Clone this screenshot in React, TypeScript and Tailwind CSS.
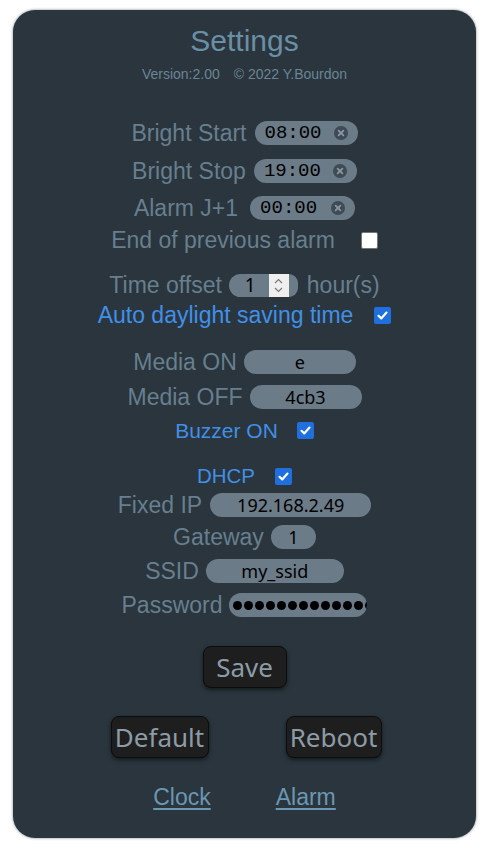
import React from 'react';

const label = "text-[#677f8e] text-[23px] leading-none";
const blue = "text-[#4190e8] leading-none";
const field = "h-[24px] rounded-[12px] bg-[#6c7b88] text-black flex items-center justify-center text-[18px] font-['Noto_Sans',sans-serif] leading-none";

function Row({ className = '', children }: { className?: string; children: React.ReactNode }) {
  return <div className={`h-[28px] flex items-center justify-center ${className}`}>{children}</div>;
}

function TimeField({ value, width }: { value: string; width: string }) {
  return (
    <div className={`${width} h-[24px] rounded-[12px] bg-[#6c7b88] flex items-center pl-[10px] pr-[10px] justify-between`}>
      <span className="font-['Liberation_Mono',monospace] text-[19px] leading-none text-black">{value}</span>
      <svg width="14" height="14" viewBox="0 0 14 14">
        <circle cx="7" cy="7" r="7" fill="#3e4a54" />
        <path d="M4.6 4.6 L9.4 9.4 M9.4 4.6 L4.6 9.4" stroke="#8c99a4" strokeWidth="1.7" strokeLinecap="round" />
      </svg>
    </div>
  );
}

function Check({ checked }: { checked: boolean }) {
  if (!checked) {
    return <div className="w-[17px] h-[17px] rounded-[2px] bg-white border border-[#767676]" />;
  }
  return (
    <div className="w-[17px] h-[17px] rounded-[2px] bg-[#1f6fde] flex items-center justify-center">
      <svg width="13" height="13" viewBox="0 0 13 13">
        <path d="M2.5 6.8 L5.2 9.4 L10.5 3.6" fill="none" stroke="white" strokeWidth="2.2" strokeLinecap="round" strokeLinejoin="round" />
      </svg>
    </div>
  );
}

function Btn({ text, width }: { text: string; width: string }) {
  return (
    <button className={`${width} h-[42px] rounded-[8px] bg-[#1f1e1e] border border-[#0c0c0c] shadow-[0_2px_4px_rgba(0,0,0,0.5)] text-[#8c9ca7] text-[26px] font-['Noto_Sans',sans-serif] leading-none flex items-center justify-center`}>
      {text}
    </button>
  );
}

export default function App() {
  return (
    <div className="w-[490px] h-[848px] bg-white pt-[10px] pl-[13px] font-['Liberation_Sans',Arial,sans-serif]">
      <div className="w-[463px] h-[828px] rounded-[22px] bg-[#2a353d] shadow-[0_0_3px_rgba(40,50,60,0.6)] pt-[12px] flex flex-col">
        <h1 className="h-[38px] leading-[38px] text-[30px] text-center text-[#6a90a5]">Settings</h1>
        <div className="mt-[6px] h-[16px] flex justify-center items-center gap-[14px] text-[14px] text-[#6a8595] leading-none">
          <span>Version:2.00</span>
          <span>© 2022 Y.Bourdon</span>
        </div>

        <Row className="mt-[37px] gap-[8px]">
          <span className={label}>Bright Start</span>
          <TimeField value="08:00" width="w-[103px]" />
        </Row>
        <Row className="mt-[10px] gap-[8px]">
          <span className={label}>Bright Stop</span>
          <TimeField value="19:00" width="w-[103px]" />
        </Row>
        <Row className="mt-[9px] gap-[12px]">
          <span className={label}>Alarm J+1</span>
          <TimeField value="00:00" width="w-[105px]" />
        </Row>
        <Row className="mt-[4px] gap-[26px]">
          <span className={`${label} text-[23.7px]`}>End of previous alarm</span>
          <Check checked={false} />
        </Row>

        <Row className="mt-[17px] gap-[7px]">
          <span className={label}>Time offset</span>
          <div className="w-[69px] h-[23px] flex items-stretch">
            <div className="w-[40px] rounded-l-[12px] bg-[#6c7b88] flex items-center pl-[16px] text-[19px] font-['Noto_Sans',sans-serif] text-black leading-[23px]">1</div>
            <div className="w-[20px] bg-[#efefef] flex flex-col items-center justify-center gap-[3px]">
              <svg width="9" height="6" viewBox="0 0 9 6"><path d="M1 5 L4.5 1.5 L8 5" fill="none" stroke="#777" strokeWidth="1.1" /></svg>
              <svg width="9" height="6" viewBox="0 0 9 6"><path d="M1 1 L4.5 4.5 L8 1" fill="none" stroke="#777" strokeWidth="1.1" /></svg>
            </div>
            <div className="w-[9px] rounded-r-[12px] bg-[#6c7b88]" />
          </div>
          <span className={`${label} ml-[2px]`}>hour(s)</span>
        </Row>
        <Row className="mt-[2px] gap-[21px]">
          <span className={`${blue} text-[23px]`}>Auto daylight saving time</span>
          <Check checked={true} />
        </Row>

        <Row className="mt-[19px] gap-[7px]">
          <span className={label}>Media ON</span>
          <div className={`${field} w-[112px]`}>e</div>
        </Row>
        <Row className="mt-[7px] gap-[7px]">
          <span className={label}>Media OFF</span>
          <div className={`${field} w-[112px]`}>4cb3</div>
        </Row>
        <Row className="mt-[5px] gap-[19px]">
          <span className={`${blue} text-[21px]`}>Buzzer ON</span>
          <Check checked={true} />
        </Row>

        <Row className="mt-[18px] gap-[20px]">
          <span className={`${blue} text-[20.5px]`}>DHCP</span>
          <Check checked={true} />
        </Row>
        <Row className="mt-[1px] gap-[8px]">
          <span className={label}>Fixed IP</span>
          <div className={`${field} w-[161px]`}>192.168.2.49</div>
        </Row>
        <Row className="mt-[4px] gap-[7px]">
          <span className={label}>Gateway</span>
          <div className={`${field} w-[45px]`}>1</div>
        </Row>
        <Row className="mt-[6px] gap-[7px]">
          <span className={label}>SSID</span>
          <div className={`${field} w-[138px]`}>my_ssid</div>
        </Row>
        <Row className="mt-[6px] gap-[7px]">
          <span className={label}>Password</span>
          <div className="w-[138px] h-[24px] rounded-[12px] bg-[#6c7b88] overflow-hidden flex items-center pl-[4px]">
            <div className="flex gap-[2px] shrink-0">
              {Array.from({ length: 13 }).map((_, i) => (
                <span key={i} className="w-[9px] h-[9px] rounded-full bg-black shrink-0" />
              ))}
            </div>
          </div>
        </Row>

        <div className="mt-[27px] flex justify-center">
          <Btn text="Save" width="w-[84px]" />
        </div>
        <div className="mt-[28px] flex justify-center gap-[77px] pl-[3px]">
          <Btn text="Default" width="w-[98px]" />
          <Btn text="Reboot" width="w-[96px]" />
        </div>
        <div className="mt-[25px] h-[28px] flex justify-center items-center gap-[65px] text-[23px] leading-none">
          <a href="#" className="text-[#6b97b2] underline underline-offset-[3px]">Clock</a>
          <a href="#" className="text-[#6b97b2] underline underline-offset-[3px]">Alarm</a>
        </div>
      </div>
    </div>
  );
}
